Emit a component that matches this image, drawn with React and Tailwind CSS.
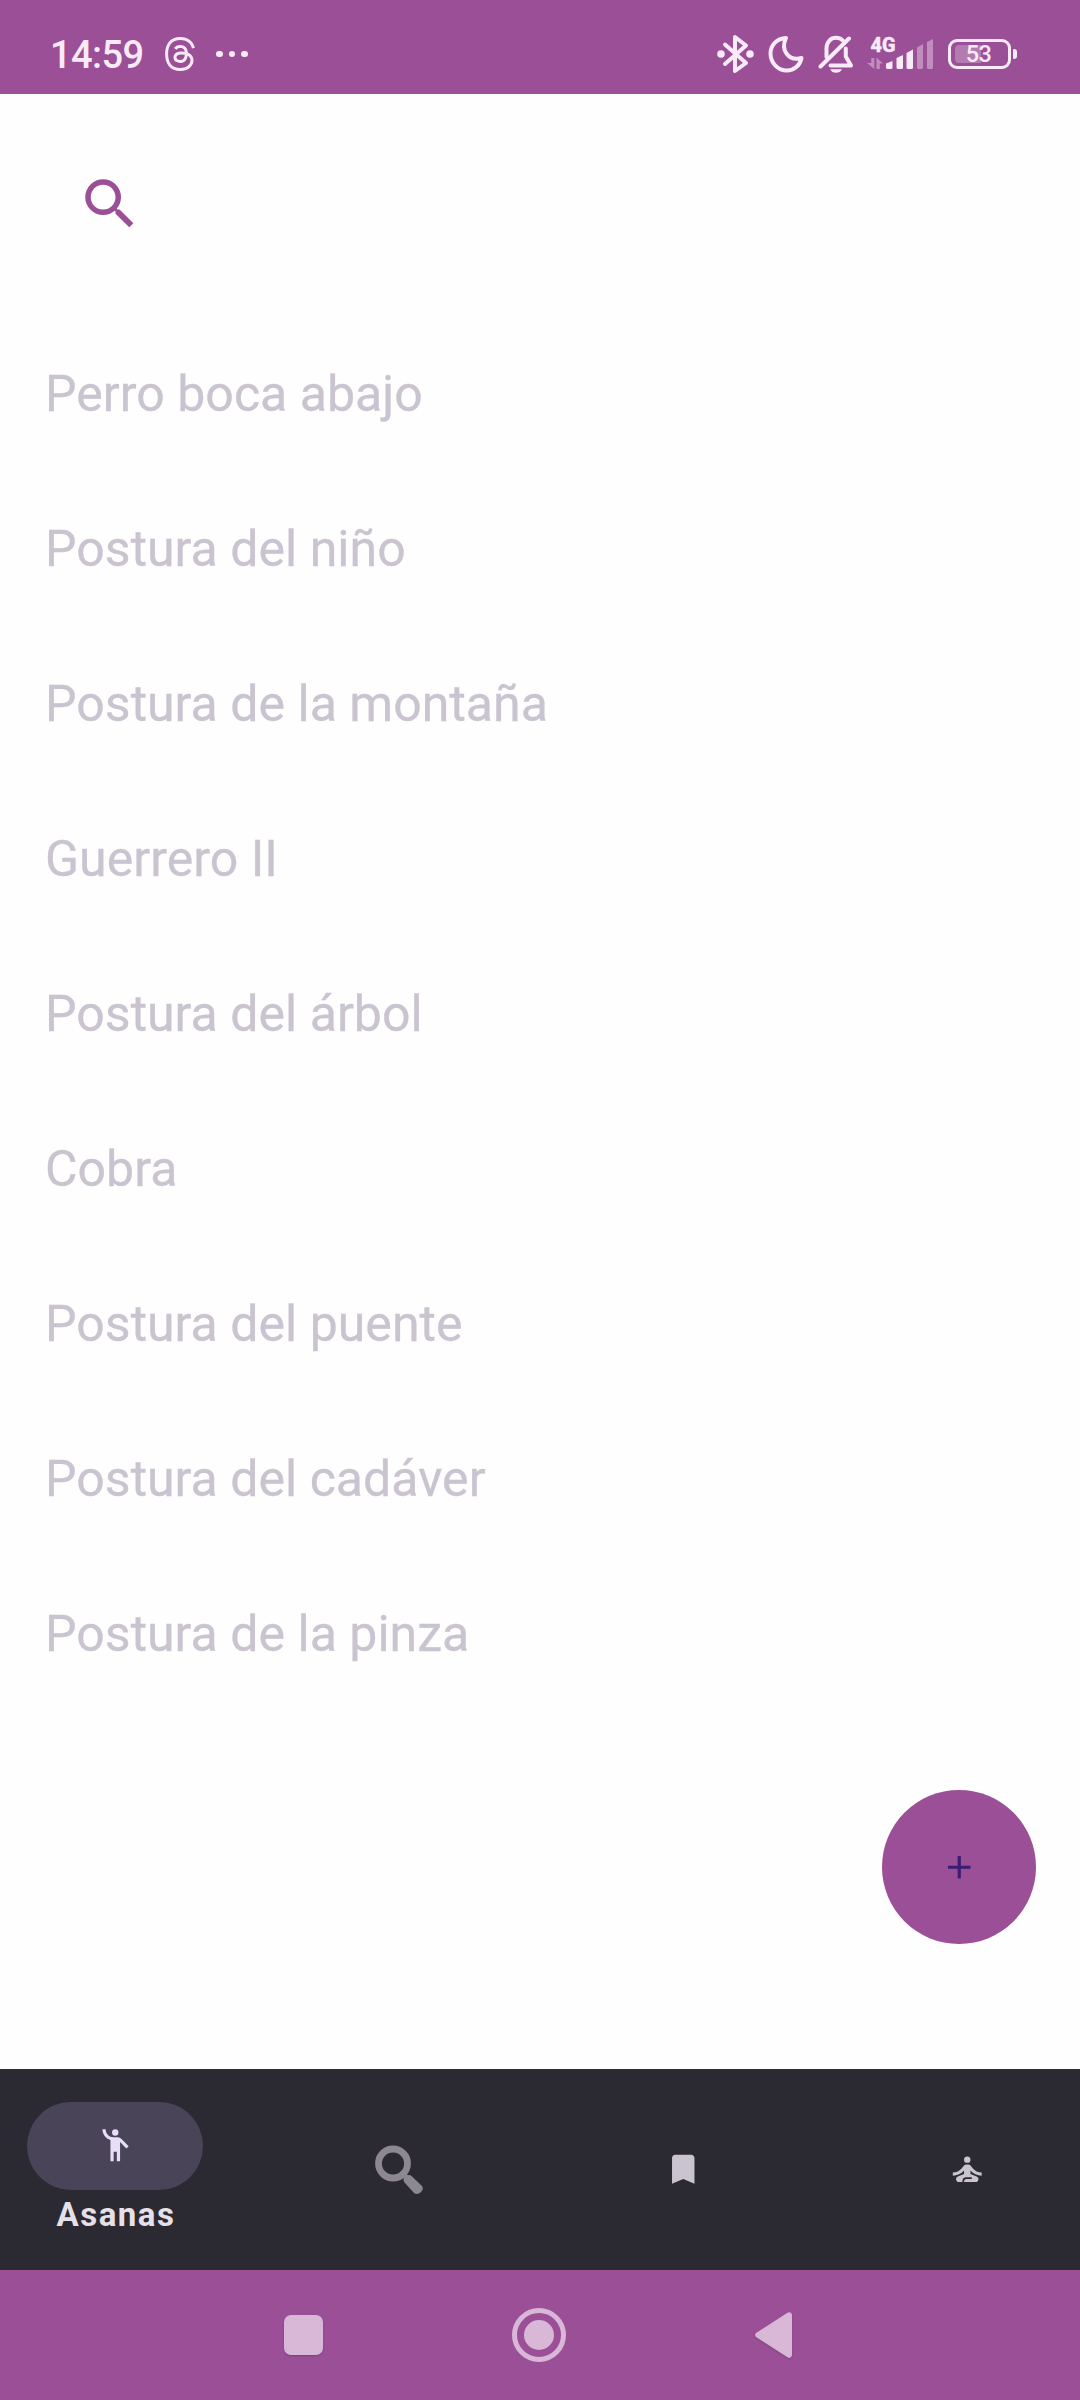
import { MdAdd, MdBookmark, MdEmojiPeople, MdSearch, MdSelfImprovement } from "react-icons/md";
import { SiThreads } from "react-icons/si";

const ASANAS = [
  "Perro boca abajo",
  "Postura del niño",
  "Postura de la montaña",
  "Guerrero II",
  "Postura del árbol",
  "Cobra",
  "Postura del puente",
  "Postura del cadáver",
  "Postura de la pinza",
];

function BluetoothIcon() {
  return (
    <svg width="37" height="40" viewBox="0 0 37 40" fill="none" stroke="currentColor" strokeWidth="4" strokeLinecap="round" strokeLinejoin="round">
      <path d="M8 10.500L29 29L18 37V3L29 11.500L8 30" />
      <circle cx="4" cy="20" r="3.800" fill="currentColor" stroke="none" />
      <circle cx="33" cy="20" r="3.800" fill="currentColor" stroke="none" />
    </svg>
  );
}

function MoonIcon() {
  return (
    <svg width="36" height="38" viewBox="0 0 36 38" fill="none" stroke="currentColor" strokeWidth="4" strokeLinejoin="round">
      <path d="M18 3C8.500 3.500 2.500 10.500 2.500 18.500C2.500 28 10 35.500 19 35.500C26 35.500 32 30.500 33.500 23C21 26.500 12 15.500 18 3Z" />
    </svg>
  );
}

function MutedBellIcon() {
  return (
    <svg width="36" height="40" viewBox="0 0 36 40" fill="none" stroke="currentColor" strokeWidth="4" strokeLinecap="round" strokeLinejoin="round">
      <path d="M8.500 23V14.500C8.500 7.500 13 3.800 18 3.800C20.800 3.800 23.300 4.900 25 6.600" />
      <path d="M2.500 32.500L31 4.500" />
      <path d="M27.800 14.500V22.500L33 31.500H12.500" />
      <path d="M12.200 35.200H24C22.800 37.600 20.700 38.800 18 38.800S13.300 37.600 12.200 35.200Z" fill="currentColor" stroke="none" />
    </svg>
  );
}

function SignalIcon() {
  return (
    <svg className="overflow-visible" width="66" height="34" viewBox="0 0 66 34" fill="currentColor">
      <text x="3.500" y="15" fontSize="20.500" fontWeight="800" textLength="25" lengthAdjust="spacingAndGlyphs" stroke="currentColor" strokeWidth="0.400">4G</text>
      <g opacity="0.400">
        <path d="M4.300 21H7.300V32L0 26H4.300Z" />
        <path d="M9.500 32V20.500L16 26.500H12.800V32Z" />
        <path d="M50 10.500L56 7V30.500Q56 32 54.500 32H51.500Q50 32 50 30.500Z" />
        <path d="M60 5L66 2V30.500Q66 32 64.500 32H61.500Q60 32 60 30.500Z" />
      </g>
      <path d="M19 26.500L25.500 24V30.500Q25.500 32 24 32H20.500Q19 32 19 30.500Z" />
      <path d="M29.500 21L36 18V30.500Q36 32 34.500 32H31Q29.500 32 29.500 30.500Z" />
      <path d="M39.500 16L46 12.500V30.500Q46 32 44.500 32H41Q39.500 32 39.500 30.500Z" />
    </svg>
  );
}

function Battery({ level }) {
  return (
    <div className="flex items-center gap-[2px]">
      <div className="relative flex h-[30px] w-[63px] items-center justify-center rounded-[9px] border-3 border-current">
        <div className="absolute top-[3px] left-[4px] h-[18px] w-[26px] rounded-l-[4px] bg-white/25" />
        <span className="relative top-[1px] right-[1px] text-[23.500px] leading-none font-medium tracking-[-0.500px]">{level}</span>
      </div>
      <div className="h-[10px] w-[4px] rounded-r-[3px] rounded-l-[1px] bg-current" />
    </div>
  );
}

function StatusBar() {
  return (
    <header className="flex h-[94px] items-center justify-between bg-[#9b4f96] pt-[14px] pr-[63px] pl-[50px] text-[#f9eaf8]">
      <div className="flex items-center">
        <span className="w-[94px] pt-[2px] text-[38px] leading-none font-medium tracking-[-0.600px]">14:59</span>
        <SiThreads className="ml-[19px]" size={34} />
        <div className="ml-[19px] flex gap-[6px]">
          <i className="size-[6.500px] rounded-full bg-current" />
          <i className="size-[6.500px] rounded-full bg-current" />
          <i className="size-[6.500px] rounded-full bg-current" />
        </div>
      </div>
      <div className="flex items-center">
        <BluetoothIcon />
        <div className="ml-[14px]"><MoonIcon /></div>
        <div className="ml-[14px]"><MutedBellIcon /></div>
        <div className="ml-[13px]"><SignalIcon /></div>
        <div className="ml-[15px]"><Battery level={53} /></div>
      </div>
    </header>
  );
}

function SearchOldIcon() {
  return (
    <svg width="50" height="50" viewBox="0 0 50 50" fill="none" stroke="#8c8792">
      <circle cx="19" cy="18.500" r="14.500" strokeWidth="6.800" />
      <path d="M28.500 28.500L33 33" strokeWidth="5" />
      <path d="M29.500 34.500Q29.500 30 35 30Q36.500 30 37.500 31L48 41Q50 44 47 47Q43.500 50.500 40 48L30.500 37.500Q29.500 36 29.500 34.500Z" fill="#8c8792" stroke="none" />
    </svg>
  );
}

function BottomNav() {
  return (
    <nav className="flex h-[201px] items-center justify-between bg-[#2b2932] pr-[25px] pl-[27px] text-[#cac4d0]">
      <button className="flex w-[176px] flex-col items-center">
        <span className="flex h-[88px] w-[176px] items-center justify-center rounded-full bg-[#4a4458] text-[#e8def8]">
          <MdEmojiPeople size={38.5} />
        </span>
        <span className="mt-[3px] mb-[1px] pl-[2px] text-[33px] leading-[44px] font-bold tracking-[1.500px] text-[#e6e0e9]">Asanas</span>
      </button>
      <button className="flex w-[176px] justify-center"><SearchOldIcon /></button>
      <button className="flex w-[176px] justify-center"><MdBookmark size={38.5} /></button>
      <button className="flex w-[176px] justify-center"><MdSelfImprovement size={38.5} /></button>
    </nav>
  );
}

function SystemNav() {
  return (
    <footer className="flex h-[130px] items-center bg-[#9b4f96] pl-[284px] text-[#d9b8d7]">
      <button className="h-[40px] w-[39px] rounded-[7px] bg-current shadow-[0_1px_2px_rgba(0,0,0,0.2)]" />
      <button className="ml-[189px] flex size-[54px] items-center justify-center rounded-full border-5 border-current">
        <span className="size-[30px] rounded-full bg-current" />
      </button>
      <svg className="ml-[189px] drop-shadow-[0_1px_1px_rgba(0,0,0,0.15)]" width="37" height="46" viewBox="0 0 37 46" fill="currentColor">
        <path d="M1 21L32.500 0.800Q36.500 -1 37 3V43Q36.500 47 32.500 45.200L1 25Q-0.800 23 1 21Z" />
      </svg>
    </footer>
  );
}

export default function App() {
  return (
    <div className="flex h-[2400px] w-[1080px] flex-col bg-[#fefefe] font-[Roboto,sans-serif]">
      <StatusBar />
      <main className="relative flex-1">
        <button className="mt-[77px] ml-[77px] block text-[#9b4f96]">
          <MdSearch size={66} />
        </button>
        <ul className="mt-[79px] pl-[45px] text-[#cac4d0]">
          {ASANAS.map((name) => (
            <li key={name} className="flex h-[155px] items-center text-[50px] leading-[58px] tracking-[0.030px] [-webkit-text-stroke:0.300px_#cac4d0]">{name}</li>
          ))}
        </ul>
        <button className="absolute right-[44px] bottom-[125px] flex size-[154px] items-center justify-center rounded-full bg-[#9b4f96] text-[#381e72]">
          <MdAdd size={38.5} />
        </button>
      </main>
      <BottomNav />
      <SystemNav />
    </div>
  );
}
